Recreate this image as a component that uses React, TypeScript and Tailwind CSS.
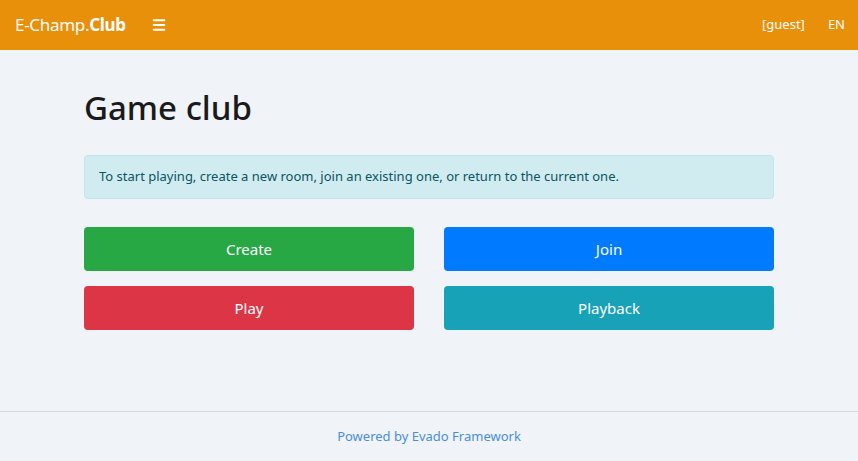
import { Menu } from "lucide-react";

const FONT = "font-['Segoe_UI','Noto_Sans',sans-serif]";

function ActionButton({ label, color }: { label: string; color: string }) {
  return (
    <button
      type="button"
      className={`h-[44px] w-full rounded-[4px] text-[15px] text-white ${color}`}
    >
      {label}
    </button>
  );
}

export default function App() {
  return (
    <div className={`flex min-h-[461px] flex-col bg-[#f0f3f8] ${FONT}`}>
      <nav className="flex h-[50px] items-center bg-[#e8900a] pl-[15px] pr-[13px] text-white">
        <a className="text-[17px] tracking-[-0.3px]">
          E-Champ.<span className="font-bold">Club</span>
        </a>
        <span className="ml-[25px] flex items-center">
          <Menu size={16} strokeWidth={3} />
        </span>
        <div className="ml-auto flex items-center gap-[23px] text-[13px]">
          <span>[guest]</span>
          <span>EN</span>
        </div>
      </nav>

      <main className="flex-1">
        <div className="mx-auto w-[690px] pt-[38px]">
          <h1 className="h-[40px] text-[33px] font-medium leading-[40px] text-[#1a1a1a]">
            Game club
          </h1>
          <div className="mt-[27px] flex h-[44px] items-center rounded-[4px] border border-[#bee5eb] bg-[#d1ecf1] px-[14px] text-[13px] text-[#0c5460]">
            To start playing, create a new room, join an existing one, or return
            to the current one.
          </div>
          <div className="mt-[28px] grid grid-cols-2 gap-x-[30px] gap-y-[15px]">
            <ActionButton label="Create" color="bg-[#28a745]" />
            <ActionButton label="Join" color="bg-[#007bff]" />
            <ActionButton label="Play" color="bg-[#dc3545]" />
            <ActionButton label="Playback" color="bg-[#17a2b8]" />
          </div>
        </div>
      </main>

      <footer className="flex h-[50px] items-center justify-center border-t border-[#d5d9df] text-[13px] text-[#4a8fd9]">
        Powered by Evado Framework
      </footer>
    </div>
  );
}
